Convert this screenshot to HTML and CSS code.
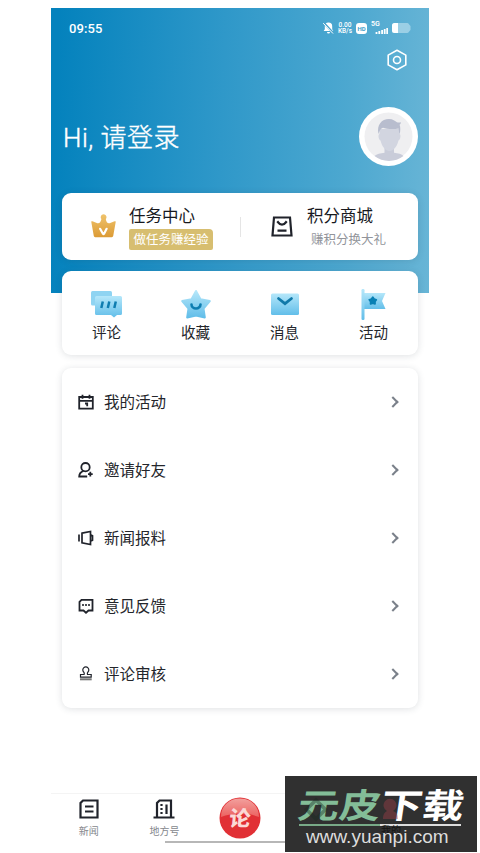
FILE: index.html
```html
<!DOCTYPE html>
<html lang="zh-CN">
<head>
<meta charset="utf-8">
<title>我的</title>
<link rel="stylesheet" href="styles.css">
</head>
<body>
<svg class="defs" width="0" height="0">
  <defs>
    <linearGradient id="sky" x1="0" y1="0" x2="0" y2="1"><stop offset="0" stop-color="#b5e7fa"/><stop offset="1" stop-color="#62bee9"/></linearGradient>
    <linearGradient id="gold" x1="0" y1="0" x2="0" y2="1"><stop offset="0" stop-color="#efc36c"/><stop offset="1" stop-color="#dc9b35"/></linearGradient>
    <linearGradient id="gloss" x1="0" y1="0" x2="0" y2="1"><stop offset="0" stop-color="#f2a09d"/><stop offset="1" stop-color="#ec6260"/></linearGradient>
  </defs>
</svg>
<main class="phone">
  <header class="status">
    <span class="time">09:55</span>
    <div class="indicators">
      <svg width="11" height="12" viewBox="0 0 11 12"><path d="M5.500 .5a3.700 3.700 0 0 0-3.700 3.700v3L.7 9h9.600L9.200 7.200v-3A3.700 3.700 0 0 0 5.500.5zM4 10h3a1.500 1.500 0 0 1-3 0z" fill="#fff"/><path d="M.7.8l9.800 10.500" stroke="#4ca5ce" stroke-width="2"/><path d="M.2 1.200l9.800 10.300" stroke="#fff"/></svg>
      <div class="speed"><span>0.00</span><span>KB/s</span></div>
      <span class="hd">HD</span>
      <div class="signal"><span>5G</span><svg width="17" height="12" viewBox="0 0 17 12"><path d="M5.500 10v2M8.300 9v3M11.100 8v4M13.700 7v5M16.200 6v6" stroke="#fff" stroke-width="1.800"/></svg></div>
      <svg width="19" height="10" viewBox="0 0 19 10"><path d="M2.500 0h12.700c1.500 0 1.800 1.500 3.300 3v4c-1.500 1.500-1.800 3-3.300 3H2.500A2.500 2.500 0 0 1 0 7.500v-5A2.500 2.500 0 0 1 2.500 0z" fill="#9bcfe5"/><path d="M2.500 0H6v10H2.500A2.500 2.500 0 0 1 0 7.500v-5A2.500 2.500 0 0 1 2.500 0z" fill="#fff"/></svg>
    </div>
  </header>
  <div class="settings">
    <svg width="20" height="22" viewBox="0 0 20 22" fill="none" stroke="#fff" stroke-width="1.600" stroke-linejoin="round"><path d="M10 1.200l8.800 4.900v9.800L10 20.800l-8.800-4.900V6.100z"/><circle cx="10" cy="11" r="3.500"/></svg>
  </div>
  <section class="profile">
    <h1>Hi, 请登录</h1>
    <svg class="avatar" width="59" height="59" viewBox="0 0 59 59"><circle cx="29.500" cy="29.500" r="29.500" fill="#fff"/><circle cx="29.500" cy="29.500" r="24" fill="#efeff1"/><path d="M15.500 49c2-2 6-2.800 10-3.300v-5h9.500v5c4 .5 8 1.300 9.500 3.300a24 24 0 0 1-29 0z" fill="#c9ccd9"/><path d="M20.500 22h20v5c1.700 0 1 6-1 6.500C38 40 34 44 30.500 44S23 40 21.500 33.500c-2-.5-2.700-6.500-1-6.500z" fill="#d2d5e0"/><path d="M19.500 27c-2-9 3-15 10.500-15 4 0 6 2 8 3.200 1.200.6 3.200.3 4 0-.2 1.200-.6 2-1.400 2.500 1 2.500.8 6 .2 9.300-1-1-.7-4-1.300-5.500-5 1-12.500.5-15.500-.8-3 .8-3.500 4-4.500 6.300z" fill="#b8bdce"/></svg>
  </section>
  <section class="card promo">
    <div class="promo-item">
      <svg class="crown" width="25" height="24" viewBox="0 0 25 24"><path d="M9.700 3.200a2.900 2.900 0 1 1 5.100 1.900c.4 3 1.800 4.600 3.700 4.200L23.600 7.200a.8.800 0 0 1 1.100.9l-2.500 13.900a1.500 1.500 0 0 1-1.400 1.200H4.200a1.500 1.500 0 0 1-1.400-1.200L.3 8.100a.8.800 0 0 1 1.100-.9l5.100 2.100c1.900.4 3.300-1.200 3.900-4.200a2.900 2.900 0 0 1-.7-1.900z" fill="url(#gold)"/><path d="M9.100 14.800l2.800 4.900q.6.800 1.200 0l2.500-4.900" fill="none" stroke="#fff" stroke-width="2.200" stroke-linecap="round"/></svg>
      <div><h2>任务中心</h2><p class="tag">做任务赚经验</p></div>
    </div>
    <div class="promo-item mall">
      <svg width="22" height="21" viewBox="0 0 22 21" fill="none" stroke="#20232b" stroke-width="2.200"><path d="M3 1.500h16l1.500 18h-19z"/><path d="M6.300 5.300c1 1.200 2 3.300 4.700 3.300s3.700-2.100 4.700-3.300M6.500 14.700h9"/></svg>
      <div><h2>积分商城</h2><p class="note">赚积分换大礼</p></div>
    </div>
  </section>
  <nav class="card shortcuts">
    <a><svg width="32" height="32" viewBox="0 0 32 32"><rect x="0" y="2" width="21" height="14.500" rx="1.500" fill="#8fd4f2"/><path d="M5.500 7h24a1.500 1.500 0 0 1 1.500 1.500v16a1.500 1.500 0 0 1-1.500 1.500H26l-3 2.500-3-2.500H5.500A1.500 1.500 0 0 1 4 24.500v-16A1.500 1.500 0 0 1 5.500 7z" fill="url(#sky)"/><path d="M11.800 12.500l-1.500 6.500M18.300 12.500L16.800 19M24.800 12.500L23.300 19" stroke="#0f7db0" stroke-width="2.500"/></svg>评论</a>
    <a><svg width="32" height="32" viewBox="0 0 32 32"><path d="M16 2l4.500 8.200 9.300 1.800-6.300 7.500 1.300 9L16 26.500 7.200 28.500l1.300-9L2.200 12l9.300-1.800z" fill="url(#sky)" stroke="url(#sky)" stroke-width="2" stroke-linejoin="round"/><path d="M11.500 15.500a4.500 4 0 0 0 9 0" fill="none" stroke="#0e7eb1" stroke-width="2.600" stroke-linecap="round"/></svg>收藏</a>
    <a><svg width="32" height="32" viewBox="0 0 32 32"><rect x="2" y="4.500" width="28" height="21.500" rx="1.500" fill="url(#sky)"/><path d="M9.500 9.500l6.500 5.200 6.500-5.200" fill="none" stroke="#1179a9" stroke-width="2.800" stroke-linecap="round"/></svg>消息</a>
    <a><svg width="32" height="32" viewBox="0 0 32 32"><path d="M5 4h22.500L24 12l3.500 8H5z" fill="url(#sky)"/><rect x="3.500" y="0" width="3" height="31" rx="1.200" fill="url(#sky)"/><path d="M14.800 8.200l1.300 1.900 2.200.7-1.400 1.800.1 2.300-2.200-.8-2.200.8.100-2.300-1.400-1.800 2.200-.7z" fill="#0880b4" stroke="#0880b4" stroke-width="1.800" stroke-linejoin="round"/></svg>活动</a>
  </nav>
  <section class="card menu">
    <a><svg width="16" height="16" viewBox="0 0 16 16" fill="none" stroke="#20232b" stroke-width="1.800"><path d="M1.200 3h13.600v11.700H1.200zM1.200 6.800h13.600M4.500.8v4M11.500.8v4M7 9.500h2.200v2.700"/></svg><span>我的活动</span><i></i></a>
    <a><svg width="16" height="16" viewBox="0 0 16 16" fill="none" stroke="#20232b" stroke-width="1.800"><circle cx="7.500" cy="5.200" r="4.200"/><path d="M5.500 8.800C3 9.800 1.200 11 1.200 14.500h8M12.300 9.800v4.700M10 12.200h4.700"/></svg><span>邀请好友</span><i></i></a>
    <a><svg width="16" height="16" viewBox="0 0 16 16" fill="none" stroke="#20232b" stroke-width="1.700"><path d="M4 3.200l8.500-1.700v13L4 12.800zM1 4.500v7M12.500 4.700l2 1v4.600l-2 1"/></svg><span>新闻报料</span><i></i></a>
    <a><svg width="16" height="16" viewBox="0 0 16 16" fill="none" stroke="#20232b" stroke-width="1.800"><path d="M3.500 1.800h11v10.700h-4L8 14.700l-2.500-2.200h-4V3.800z"/><path d="M4.200 7h1.600M7.200 7h1.600M10.200 7h1.600"/></svg><span>意见反馈</span><i></i></a>
    <a><svg width="16" height="16" viewBox="0 0 16 16" fill="none" stroke="#20232b" stroke-width="1.200"><path d="M5.800 6.200a3 3 0 1 1 4 0c-.7.700-.5 1.500-.3 2.300h3.700v2.700H2.500V8.500h3.600c.3-.8.400-1.600-.3-2.300z"/><path d="M2 13.300h11.700" stroke="#777" stroke-width="2"/></svg><span>评论审核</span><i></i></a>
  </section>
  <footer class="tabs">
    <a><svg width="20" height="20" viewBox="0 0 20 20" fill="none" stroke="#20232b" stroke-width="2.200"><path d="M4 1.500h14.500v17h-17V4zM6 7.500h8.500M6 12.500h8.500"/></svg>新闻</a>
    <a><svg width="22" height="20" viewBox="0 0 22 20" fill="none" stroke="#20232b" stroke-width="2.200"><path d="M4 18.500V4l2.500-2.500H18v17M.5 18.500h21M13.500 5.500v9.500"/><path d="M8.500 5v2M8.500 9v2M8.500 13v2"/></svg>地方号</a>
    <a class="center"><span class="badge"><svg width="42" height="42" viewBox="0 0 42 42"><circle cx="21" cy="21" r="20.500" fill="#e13035"/><path d="M2 20C2 9 10 1.500 21 1.500S40 9 40 20c-13-5-27-4-38 0z" fill="url(#gloss)"/></svg><b>论</b></span></a>
    <a></a>
    <a></a>
  </footer>
  <div class="home-line"></div>
</main>
<aside class="watermark">
  <div class="brand"><span>元皮</span>下载</div>
  <svg class="ghost" width="192" height="76" viewBox="0 0 192 76"><path d="M31 24l9.500 9.500L31 43l-9.500-9.500z" fill="none" stroke="#192c22" stroke-width="3.500"/><path d="M98 43c0-5 2-7 4-8a6.500 6.500 0 1 1 6 0c3 1 5 3 5 8z" fill="#a8404a"/></svg>
  <span class="ghost-label">我的</span>
  <div class="rule"></div>
  <div class="url">www.yuanpi.com</div>
</aside>
</body>
</html>
```
FILE: styles.css
```css
* { box-sizing: border-box; }
body {
  margin: 0;
  height: 853px;
  overflow: hidden;
  background: #fff;
  color: #24262b;
  font-family: Roboto, "Noto Sans CJK SC", sans-serif;
}
h1, h2, p { margin: 0; font-weight: 400; }
svg { display: block; flex: none; }
.defs { position: absolute; }
.phone {
  width: 378px;
  height: 845px;
  margin: 8px 0 0 51px;
  display: flex;
  flex-direction: column;
  background: linear-gradient(92deg, #0482bd 2%, #2f98c9 45%, #4da8d0 78%, #68b5d6 100%) no-repeat 0 0 / 378px 285px;
}
.status {
  height: 40px;
  flex: none;
  padding: 0 18px;
  display: flex;
  align-items: center;
  justify-content: space-between;
  color: #fff;
}
.time { font-size: 13px; font-weight: 500; letter-spacing: .1px; }
.indicators { display: flex; align-items: center; gap: 4px; }
.speed { display: flex; flex-direction: column; font-size: 6.500px; line-height: 6px; font-weight: 500; text-align: center; }
.hd { width: 11px; height: 11px; border-radius: 3px; background: #fff; color: #439fca; font-size: 6px; line-height: 11px; font-weight: 700; text-align: center; }
.signal { position: relative; }
.signal span { position: absolute; top: -1px; left: 0; font-size: 7px; line-height: 7px; font-weight: 600; }
.settings { height: 24px; flex: none; display: flex; justify-content: flex-end; align-items: center; padding-right: 22px; }
.profile {
  height: 59px;
  flex: none;
  margin: 35px 11px 0 12px;
  display: flex;
  align-items: center;
  justify-content: space-between;
  color: #fff;
}
.profile h1 { padding-top: 2px; font-size: 26px; line-height: 38px; font-weight: 300; letter-spacing: .5px; -webkit-text-stroke: .4px #fff; }
.card { margin: 0 11px; border-radius: 9px; background: #fff; box-shadow: 0 1px 7px rgba(40, 55, 65, .15); }
.promo { height: 67px; margin-top: 27px; display: grid; grid-template-columns: 1fr 1fr; flex: none; }
.promo-item { display: flex; padding: 12px 0 0 29px; gap: 12px; }
.promo-item svg { margin-top: 11px; }
.promo-item .crown { margin-top: 9px; }
.promo-item h2 { font-size: 16.500px; line-height: 22px; color: #17191e; position: relative; top: 1px; left: 1px; }
.promo-item.mall { position: relative; padding-left: 31px; gap: 13px; }
.mall::before { content: ""; position: absolute; left: 0; top: 24px; width: 1px; height: 20px; background: #e5e5e5; }
.tag { width: 84px; margin: 2px 0 0 1px; border-radius: 2px 4px 2px 2px; background: #d7be70; color: #fff; font-size: 12.500px; line-height: 21px; text-align: center; }
.note { margin: 3px 0 0 5px; color: #92959b; font-size: 12.500px; line-height: 19px; }
.shortcuts { height: 84px; margin-top: 11px; flex: none; display: grid; grid-template-columns: repeat(4, 1fr); }
.shortcuts a { display: flex; flex-direction: column; align-items: center; padding-top: 18px; font-size: 14.500px; line-height: 20px; gap: 3px; }
.menu { height: 340px; margin-top: 13px; flex: none; }
.menu a { height: 68px; display: flex; align-items: center; padding: 0 20px 0 16px; }
.menu span { margin-left: 10px; font-size: 15.500px; line-height: 24px; position: relative; top: 1px; }
.menu i { width: 8px; height: 8px; margin-left: auto; border: solid #7a808a; border-width: 2px 2px 0 0; transform: translateX(-1px) rotate(45deg); }
.tabs { height: 60px; margin-top: 85px; flex: none; display: grid; grid-template-columns: repeat(5, 1fr); border-top: 1px solid #f4f4f4; color: #85888d; font-size: 10px; }
.tabs a { display: flex; flex-direction: column; align-items: center; padding-top: 5px; gap: 6px; line-height: 14px; }
.tabs .center { padding-top: 3px; }
.badge { position: relative; width: 42px; height: 42px; }
.badge b { position: absolute; inset: 0; color: #fbd8d6; font: 900 21px/41px "Noto Sans CJK SC", sans-serif; text-align: center; transform: skewX(-5deg); }
.home-line { position: absolute; left: 165px; top: 841px; width: 150px; height: 2px; background: #b7b7b7; }
.watermark { position: absolute; left: 285px; top: 776px; width: 192px; height: 76px; background: #303030; }
.ghost { position: absolute; left: 0; top: 0; opacity: .4; }
.ghost-label { position: absolute; left: 96px; top: 48px; color: #151515; font-size: 10px; line-height: 14px; }
.brand { height: 47px; padding-left: 14px; color: #fff; font: 700 41.500px/56px "Noto Sans CJK SC", sans-serif; white-space: nowrap; transform: scaleY(.82) skewX(-7deg); }
.brand span { color: #83bd98; }
.rule { width: 162px; height: 2px; margin: 1px 0 0 14px; background: linear-gradient(90deg, #78a987 50%, #ddd 50%); }
.url { position: relative; margin-left: 21px; color: #ddd; font: 19px/21px "Liberation Sans", sans-serif; white-space: nowrap; }
```
